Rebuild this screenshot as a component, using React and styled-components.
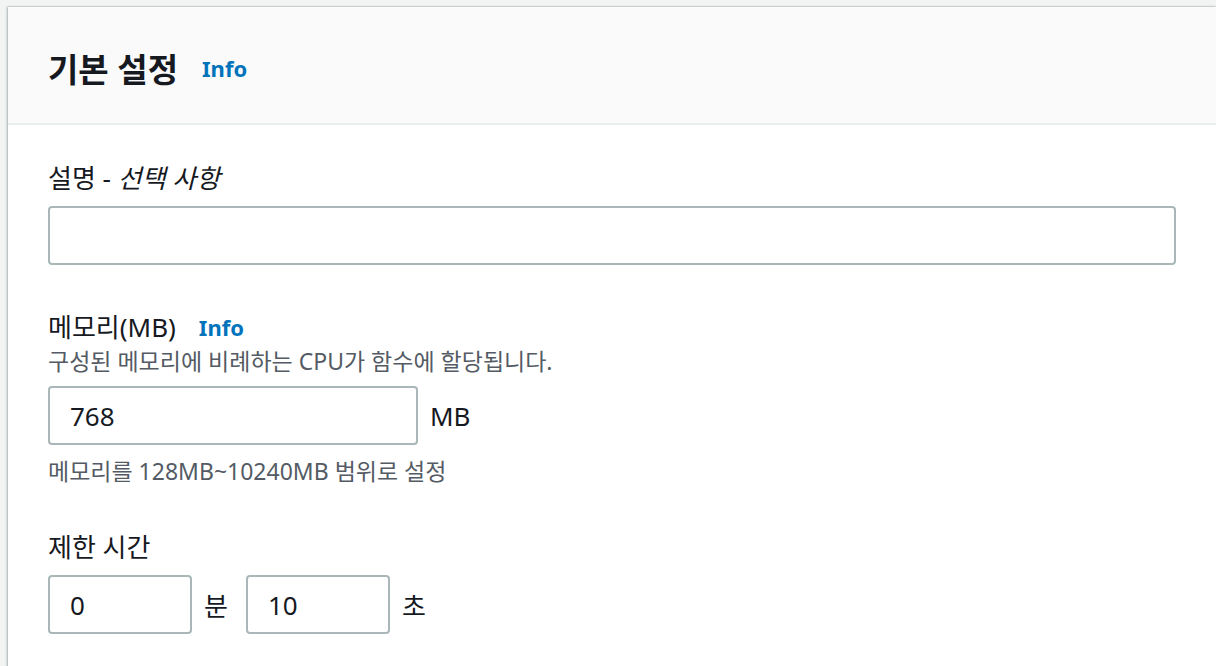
import React from "react";
import styled, { createGlobalStyle } from "styled-components";

const GlobalStyle = createGlobalStyle`
  html, body {
    margin: 0;
    padding: 0;
    background: #f2f3f3;
    font-family: "Noto Sans", "Noto Sans CJK KR", sans-serif;
    color: #16191f;
  }
`;

const Page = styled.div`
  padding: 7px 0 0 8px;
  height: 666px;
  overflow: hidden;
  box-sizing: border-box;
`;

const Panel = styled.section`
  background: #ffffff;
  min-height: 700px;
  box-shadow: -1px 0 2px rgba(0, 28, 36, 0.3), 0 -1px 1px rgba(0, 28, 36, 0.08);
`;

const Header = styled.header`
  height: 118px;
  box-sizing: border-box;
  background: #fafafa;
  border-bottom: 2px solid #eaeded;
  padding: 6px 40px 0;
  display: flex;
  align-items: center;
`;

const Title = styled.h2`
  margin: 0;
  font-size: 33px;
  font-weight: 700;
`;

const InfoLink = styled.a`
  color: #0073bb;
  font-weight: 700;
  font-size: 22px;
  margin-left: ${({ $gap }) => $gap || 22}px;
  text-decoration: none;
  cursor: pointer;
`;

const Body = styled.div`
  padding: 36px 40px 40px;
  display: flex;
  flex-direction: column;
`;

const Field = styled.div`
  display: flex;
  flex-direction: column;
  margin-top: ${({ $top }) => $top || 0}px;
`;

const Label = styled.label`
  font-size: 26px;
  line-height: 34px;
  display: flex;
  align-items: center;
  em {
    font-style: italic;
  }
`;

const Description = styled.div`
  font-size: 23px;
  line-height: 28px;
  color: #545b64;
  margin-top: ${({ $top }) => $top || 0}px;
`;

const Row = styled.div`
  display: flex;
  align-items: center;
  margin-top: 11px;
`;

const Input = styled.input`
  box-sizing: border-box;
  width: ${({ $width }) => $width}px;
  height: 59px;
  border: 2px solid #aab7b8;
  border-radius: 4px;
  padding: 0 20px;
  font-family: inherit;
  font-size: 26px;
  color: #16191f;
  background: #ffffff;
  outline: none;
`;

const Unit = styled.span`
  font-size: 26px;
  margin: 0 ${({ $right }) => $right || 0}px 0 12px;
`;

export default function App() {
  return (
    <>
      <GlobalStyle />
      <Page>
        <Panel>
          <Header>
            <Title>기본 설정</Title>
            <InfoLink $gap={24}>Info</InfoLink>
          </Header>
          <Body>
            <Field>
              <Label>
                설명 -&nbsp;<em>선택 사항</em>
              </Label>
              <Row>
                <Input $width={1130} defaultValue="" />
              </Row>
            </Field>

            <Field $top={45}>
              <Label>
                메모리(MB)
                <InfoLink $gap={23}>Info</InfoLink>
              </Label>
              <Description $top={3}>
                구성된 메모리에 비례하는 CPU가 함수에 할당됩니다.
              </Description>
              <Row>
                <Input $width={370} defaultValue="768" />
                <Unit>MB</Unit>
              </Row>
              <Description $top={12}>메모리를 128MB~10240MB 범위로 설정</Description>
            </Field>

            <Field $top={45}>
              <Label>제한 시간</Label>
              <Row>
                <Input $width={144} defaultValue="0" />
                <Unit $right={18}>분</Unit>
                <Input $width={144} defaultValue="10" />
                <Unit>초</Unit>
              </Row>
            </Field>
          </Body>
        </Panel>
      </Page>
    </>
  );
}
